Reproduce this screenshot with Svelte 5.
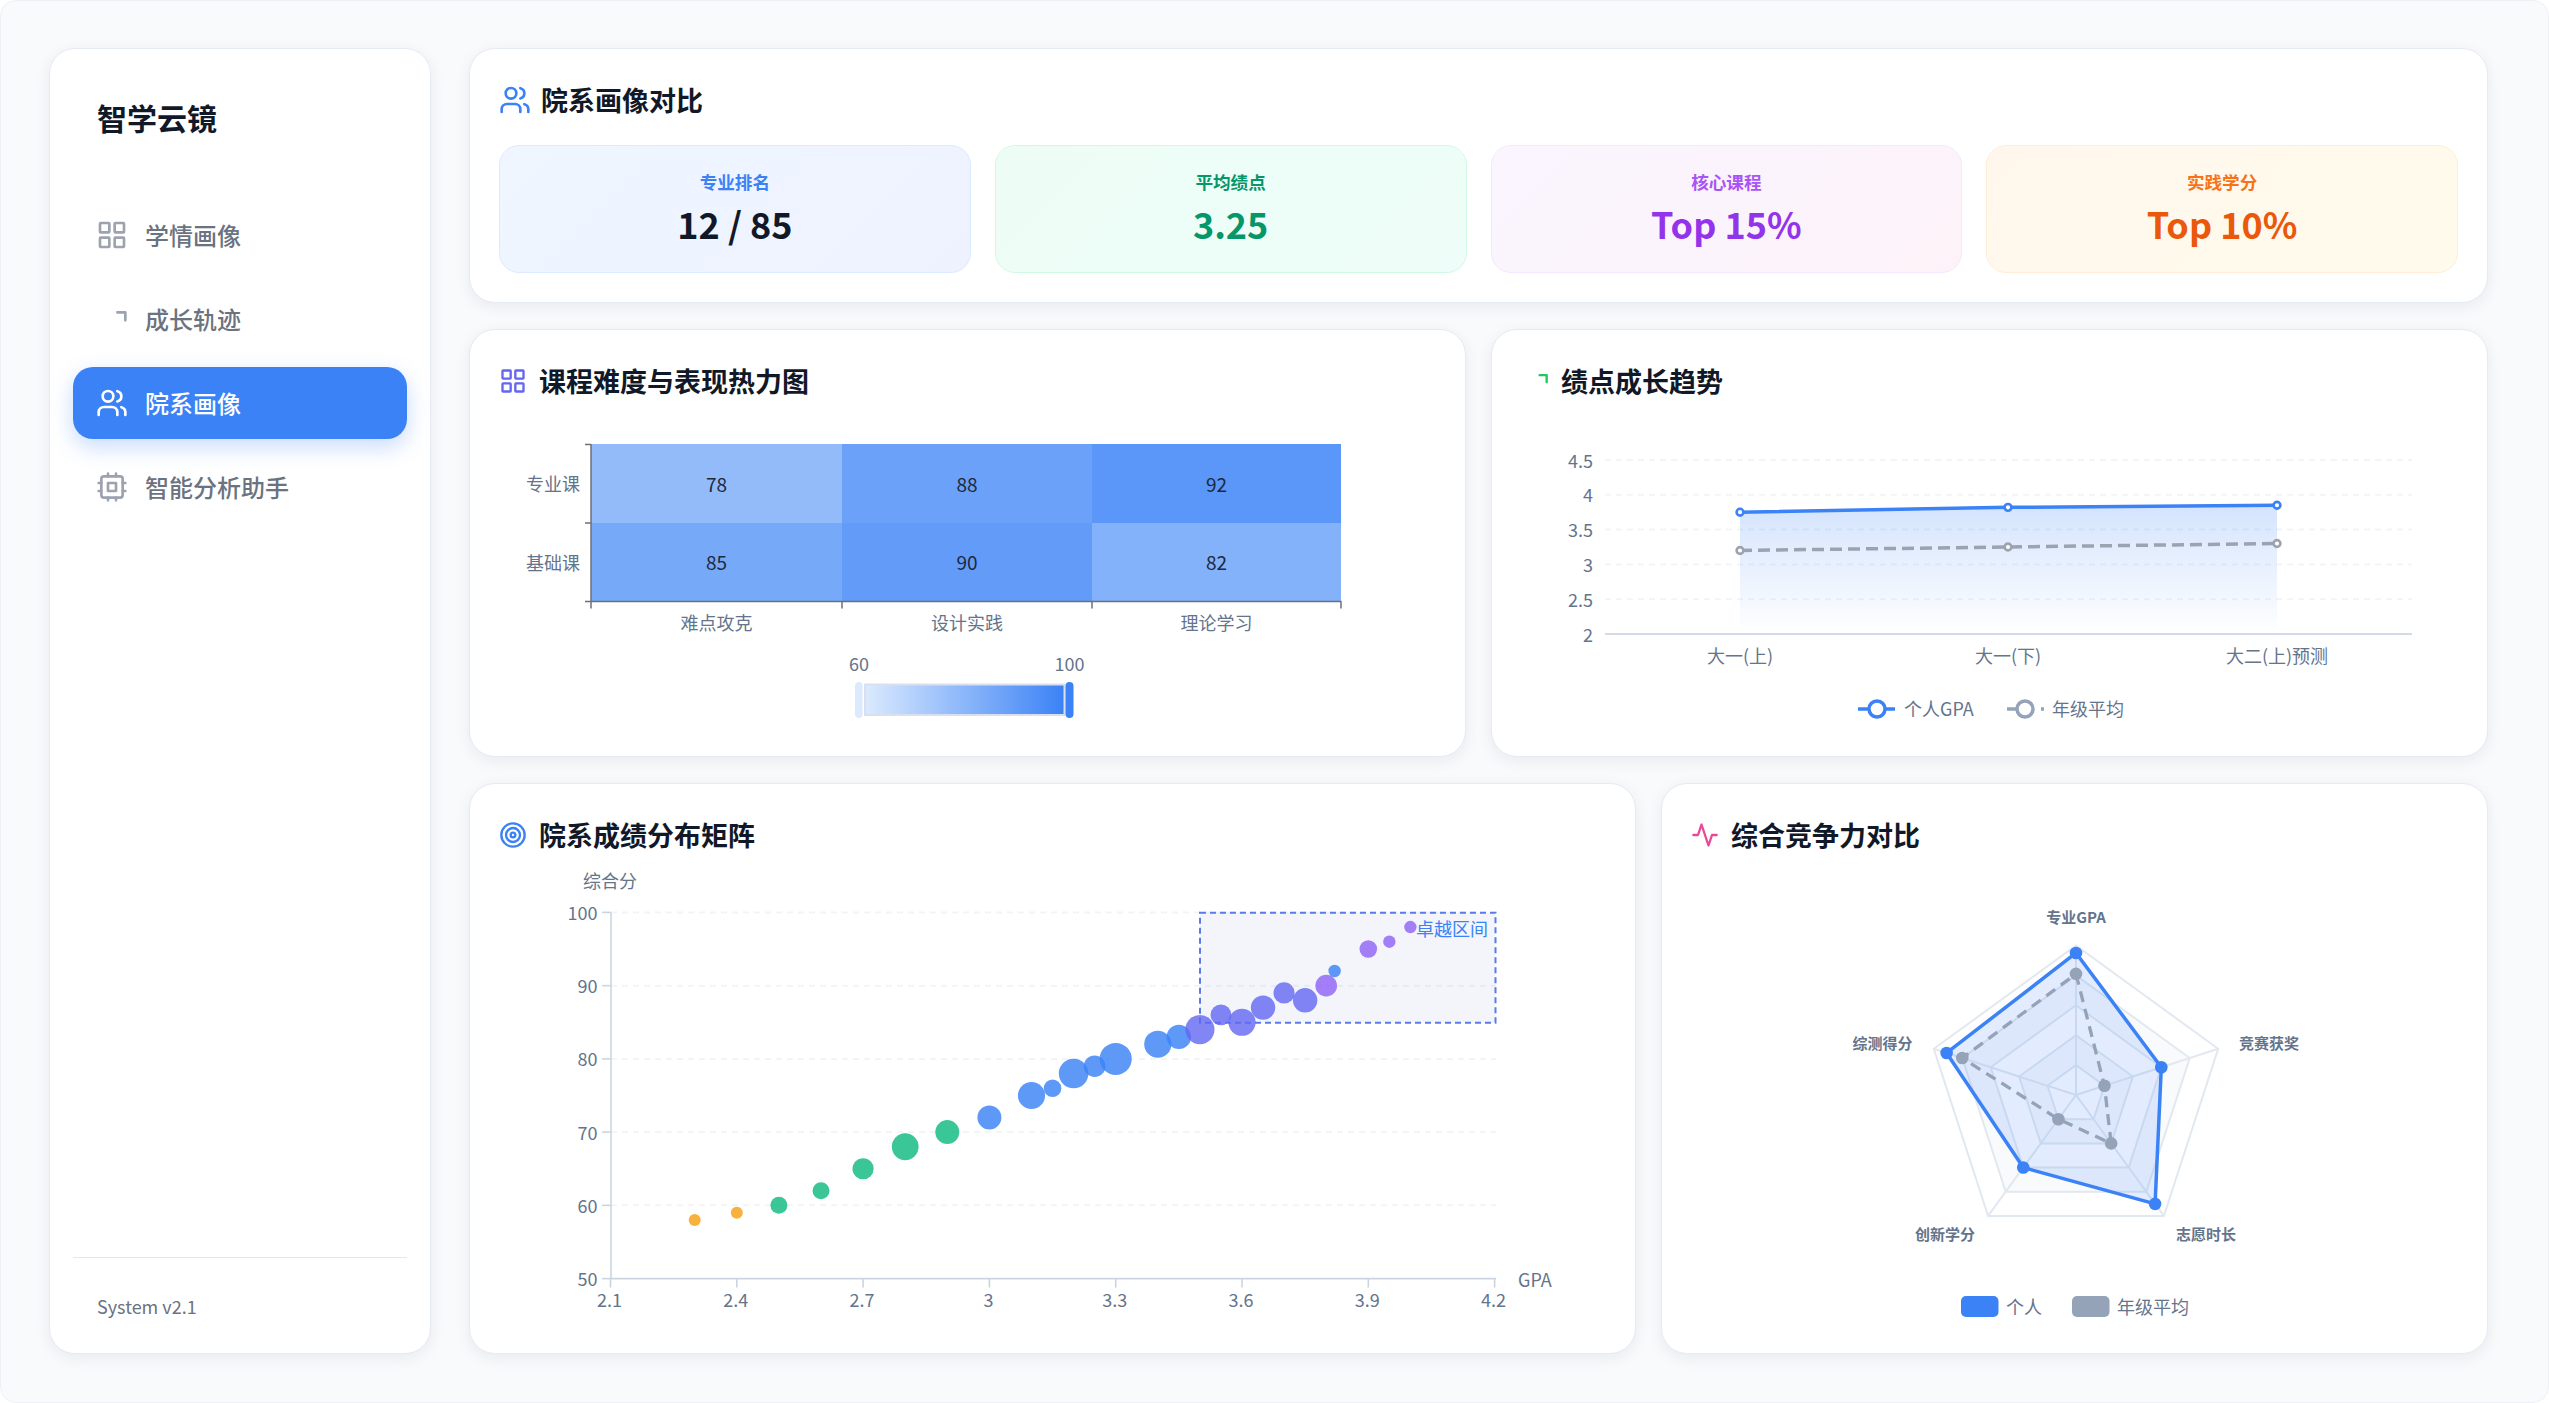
<script>
  const nav = [
    { label: '学情画像', icon: 'grid' },
    { label: '成长轨迹', icon: 'trend' },
    { label: '院系画像', icon: 'users', active: true },
    { label: '智能分析助手', icon: 'cpu' }
  ];
  const stats = [
    { k: 'blue', label: '专业排名', value: '12 / 85' },
    { k: 'green', label: '平均绩点', value: '3.25' },
    { k: 'purple', label: '核心课程', value: 'Top 15%' },
    { k: 'orange', label: '实践学分', value: 'Top 10%' }
  ];

  // heatmap
  const hx = [591, 842, 1092, 1341];
  const hy = [444, 523, 601];
  const heatCells = [
    [0, 0, 78], [1, 0, 88], [2, 0, 92],
    [0, 1, 85], [1, 1, 90], [2, 1, 82]
  ];
  const heatColor = (v) => {
    const t = (v - 60) / 40;
    const m = (a, b) => Math.round(a + (b - a) * t);
    return `rgb(${m(219, 59)},${m(234, 130)},${m(254, 246)})`;
  };
  const heatX = ['难点攻克', '设计实践', '理论学习'];
  const heatY = ['专业课', '基础课'];

  // line chart
  const lx = [1740, 2008, 2277];
  const ly = (v) => 634 - (v - 2) * 69.6;
  const lineTicks = [2, 2.5, 3, 3.5, 4, 4.5];
  const gpa = [3.75, 3.82, 3.85];
  const avg = [3.2, 3.25, 3.3];
  const pts = (arr) => arr.map((v, i) => `${lx[i]},${ly(v)}`).join(' ');
  const lineLabels = ['大一(上)', '大一(下)', '大二(上)预测'];

  // scatter
  const sx = (v) => 610.5 + (v - 2.1) * 421;
  const sy = (v) => 1278.6 - (v - 50) * 7.324;
  const C = { o: 'rgba(245,158,11,.8)', g: 'rgba(16,185,129,.82)', b: 'rgba(59,130,246,.82)', i: 'rgba(99,102,241,.8)', p: 'rgba(139,92,246,.78)' };
  const dots = [
    [2.3, 58, 6, 'o'], [2.4, 59, 6, 'o'], [2.5, 60, 8.5, 'g'], [2.6, 62, 8.5, 'g'],
    [2.7, 65, 10.6, 'g'], [2.8, 68, 13.4, 'g'], [2.9, 70, 12, 'g'], [3, 72, 12, 'b'],
    [3.1, 75, 13.6, 'b'], [3.15, 76, 8.8, 'b'], [3.2, 78, 14.8, 'b'], [3.25, 79, 10.8, 'b'],
    [3.3, 80, 16, 'b'], [3.4, 82, 13.6, 'b'], [3.45, 83, 12.2, 'b'], [3.5, 84, 14.6, 'i'],
    [3.55, 86, 10.4, 'i'], [3.6, 85, 13.6, 'i'], [3.65, 87, 12.2, 'i'], [3.7, 89, 10.6, 'i'],
    [3.75, 88, 12.2, 'i'], [3.8, 90, 10.8, 'p'], [3.82, 92, 6.2, 'b'], [3.9, 95, 8.8, 'p'],
    [3.95, 96, 6.2, 'p'], [4, 98, 6.2, 'p']
  ];
  const scatterY = [50, 60, 70, 80, 90, 100];
  const scatterX = [[2.1, '2.1'], [2.4, '2.4'], [2.7, '2.7'], [3, '3'], [3.3, '3.3'], [3.6, '3.6'], [3.9, '3.9'], [4.2, '4.2']];

  // radar
  const RC = { x: 2076, y: 1095, r: 149.5 };
  const rp = (i, f) => {
    const a = (-90 + 72 * i) * Math.PI / 180;
    return [RC.x + Math.cos(a) * RC.r * f, RC.y + Math.sin(a) * RC.r * f];
  };
  const poly = (vals) => vals.map((f, i) => rp(i, f).join(',')).join(' ');
  const rings = [1, 0.8, 0.6, 0.4, 0.2];
  const ringFill = ['#ffffff', '#f8fafc', '#ffffff', '#f8fafc', '#ffffff'];
  const mine = [0.95, 0.6, 0.9, 0.6, 0.91];
  const peers = [0.81, 0.2, 0.4, 0.2, 0.8];
  const radarLabels = [
    ['专业GPA', 2076, 918], ['竞赛获奖', 2269, 1044], ['志愿时长', 2206, 1234.6],
    ['创新学分', 1945, 1234.6], ['综测得分', 1882.5, 1044]
  ];
</script>

{#snippet icon(name, size)}
  <svg class="ico" width={size} height={size} viewBox="0 0 24 24" fill="none" stroke="currentColor" stroke-width="2" stroke-linecap="round" stroke-linejoin="round">
    {#if name === 'grid'}
      <rect x="3" y="3" width="7" height="7" rx="0.5" /><rect x="14" y="3" width="7" height="7" rx="0.5" />
      <rect x="14" y="14" width="7" height="7" rx="0.5" /><rect x="3" y="14" width="7" height="7" rx="0.5" />
    {:else if name === 'trend'}
      <polyline points="16 7 22 7 22 13" />
    {:else if name === 'users'}
      <path d="M16 21v-2a4 4 0 0 0-4-4H6a4 4 0 0 0-4 4v2" /><circle cx="9" cy="7" r="4" />
      <path d="M22 21v-2a4 4 0 0 0-3-3.87" /><path d="M16 3.13a4 4 0 0 1 0 7.75" />
    {:else if name === 'cpu'}
      <rect x="4" y="4" width="16" height="16" rx="2" /><rect x="9" y="9" width="6" height="6" />
      <path d="M15 2v2M15 20v2M2 15h2M2 9h2M20 15h2M20 9h2M9 2v2M9 20v2" />
    {:else if name === 'target'}
      <circle cx="12" cy="12" r="10" /><circle cx="12" cy="12" r="6" /><circle cx="12" cy="12" r="2" />
    {:else if name === 'activity'}
      <path d="M22 12h-4l-3 9L9 3l-3 9H2" />
    {/if}
  </svg>
{/snippet}

<div class="app">
  <aside class="side">
    <h1 class="brand">智学云镜</h1>
    <nav class="nav">
      {#each nav as n}
        <div class="item" class:active={n.active}>
          <span class="nav-ico">{@render icon(n.icon, 32)}</span>
          <span class="nav-txt">{n.label}</span>
        </div>
      {/each}
    </nav>
    <div class="foot"><span>System v2.1</span></div>
  </aside>

  <main class="main">
    <section class="card top">
      <h2 class="title big"><span class="c-blue">{@render icon('users', 32)}</span><span class="ttl">院系画像对比</span></h2>
      <div class="stats">
        {#each stats as s}
          <div class="stat {s.k}">
            <div class="lab">{s.label}</div>
            <div class="val">{s.value}</div>
          </div>
        {/each}
      </div>
    </section>

    <div class="row mid">
      <section class="card">
        <h2 class="title"><span class="c-indigo">{@render icon('grid', 28)}</span><span class="ttl">课程难度与表现热力图</span></h2>
        <svg class="chart" width="937" height="324" viewBox="499 404 937 324">
          <defs>
            <linearGradient id="vm" x1="0" x2="1" y1="0" y2="0">
              <stop offset="0" stop-color="#dbeafe" /><stop offset="1" stop-color="#3b82f6" />
            </linearGradient>
          </defs>
          {#each heatCells as [c, r, v]}
            <rect x={hx[c]} y={hy[r]} width={hx[c + 1] - hx[c]} height={hy[r + 1] - hy[r]} fill={heatColor(v)} />
            <text class="cell" x={(hx[c] + hx[c + 1]) / 2} y={(hy[r] + hy[r + 1]) / 2 + 1}>{v}</text>
          {/each}
          <path class="hax" d="M591 444V601.5H1341.5M585 444.5h6M585 523h6M585 601.5h6M591 601.5v7M842 601.5v7M1092 601.5v7M1341 601.5v7" />
          {#each heatY as t, i}
            <text class="lb end" x="580" y={(hy[i] + hy[i + 1]) / 2 + 1}>{t}</text>
          {/each}
          {#each heatX as t, i}
            <text class="lb mid-a" x={(hx[i] + hx[i + 1]) / 2} y="623">{t}</text>
          {/each}
          <text class="lb mid-a" x="859" y="664.5">60</text>
          <text class="lb mid-a" x="1069.5" y="664.5">100</text>
          <rect x="865" y="684.5" width="199.5" height="30.5" fill="url(#vm)" stroke="#d9dfee" stroke-width="2" />
          <rect x="855" y="682" width="7.5" height="36" rx="3.7" fill="#dbeafe" />
          <rect x="1065.5" y="682" width="8" height="36" rx="4" fill="#3b82f6" />
        </svg>
      </section>

      <section class="card">
        <h2 class="title"><span class="c-green">{@render icon('trend', 28)}</span><span class="ttl">绩点成长趋势</span></h2>
        <svg class="chart" width="937" height="324" viewBox="1521 404 937 324">
          <defs>
            <linearGradient id="area" x1="0" x2="0" y1="0" y2="1">
              <stop offset="0" stop-color="#3b82f6" stop-opacity="0.22" />
              <stop offset="1" stop-color="#3b82f6" stop-opacity="0" />
            </linearGradient>
          </defs>
          {#each lineTicks as t}
            <text class="lb end" x="1593" y={ly(t) + 1}>{t}</text>
            {#if t !== 2}
              <line class="grid" x1="1605" x2="2412" y1={ly(t)} y2={ly(t)} />
            {/if}
          {/each}
          <line x1="1605" x2="2412" y1="634" y2="634" stroke="#d5dae8" stroke-width="2" />
          <polygon fill="url(#area)" points="{pts(gpa)} 2277,634 1740,634" />
          <polyline class="l-blue" points={pts(gpa)} />
          <polyline class="l-gray" points={pts(avg)} />
          {#each gpa as v, i}
            <circle class="p-blue" cx={lx[i]} cy={ly(v)} r="3.4" />
          {/each}
          {#each avg as v, i}
            <circle class="p-gray" cx={lx[i]} cy={ly(v)} r="3.4" />
          {/each}
          {#each lineLabels as t, i}
            <text class="lb mid-a" x={lx[i]} y="656.5">{t}</text>
          {/each}
          <line x1="1858" x2="1895" y1="709" y2="709" stroke="#3b82f6" stroke-width="3.5" />
          <circle cx="1877" cy="709" r="8" fill="#fff" stroke="#3b82f6" stroke-width="3.5" />
          <text class="lb" x="1904" y="709.5">个人GPA</text>
          <line x1="2007" x2="2044" y1="709" y2="709" stroke="#94a3b8" stroke-width="3.5" stroke-dasharray="11 23 3" />
          <circle cx="2025" cy="709" r="8" fill="#fff" stroke="#94a3b8" stroke-width="3.5" />
          <text class="lb" x="2052" y="709.5">年级平均</text>
        </svg>
      </section>
    </div>

    <div class="row bot">
      <section class="card">
        <h2 class="title"><span class="c-blue">{@render icon('target', 28)}</span><span class="ttl">院系成绩分布矩阵</span></h2>
        <svg class="chart" width="1107" height="467" viewBox="499 858 1107 467">
          {#each scatterY as t}
            {#if t !== 50}
              <line class="grid" x1="611" x2="1496" y1={sy(t)} y2={sy(t)} />
            {/if}
            <line class="ax" x1="602" x2="611" y1={sy(t)} y2={sy(t)} />
            <text class="lb end" x="597.5" y={sy(t) + 1}>{t}</text>
          {/each}
          <rect class="zone" x="1200" y="912.7" width="295.5" height="110" />
          <line class="ax" x1="611" x2="611" y1={sy(100)} y2={sy(50)} />
          <line class="ax" x1="611" x2="1496" y1={sy(50)} y2={sy(50)} />
          {#each scatterX as [v, t]}
            <line class="ax" x1={sx(v)} x2={sx(v)} y1={sy(50)} y2={sy(50) + 9} />
            <text class="lb mid-a" x={sx(v) - 1} y="1300.5">{t}</text>
          {/each}
          <text class="lb mid-a" x="610" y="881.5">综合分</text>
          <text class="lb" x="1518" y="1280">GPA</text>
          <text class="zone-t" x="1488" y="929.5">卓越区间</text>
          {#each dots as [x, y, r, k]}
            <circle cx={sx(x)} cy={sy(y)} r={r} fill={C[k]} />
          {/each}
        </svg>
      </section>

      <section class="card">
        <h2 class="title"><span class="c-pink">{@render icon('activity', 28)}</span><span class="ttl">综合竞争力对比</span></h2>
        <svg class="chart" width="767" height="467" viewBox="1691 858 767 467">
          {#each rings as f, i}
            <polygon points={poly([f, f, f, f, f])} fill={ringFill[i]} stroke="#e2e8f0" stroke-width="2" />
          {/each}
          {#each [0, 1, 2, 3, 4] as i}
            <line x1={RC.x} y1={RC.y} x2={rp(i, 1)[0]} y2={rp(i, 1)[1]} stroke="#e2e8f0" stroke-width="2" />
          {/each}
          <polygon points={poly(mine)} fill="rgba(59,130,246,.15)" stroke="#3b82f6" stroke-width="3.5" stroke-linejoin="round" />
          <polygon points={poly(peers)} fill="none" stroke="#94a3b8" stroke-width="3.3" stroke-dasharray="11 7" />
          {#each mine as f, i}
            <circle cx={rp(i, f)[0]} cy={rp(i, f)[1]} r="6.3" fill="#3b82f6" />
          {/each}
          {#each peers as f, i}
            <circle cx={rp(i, f)[0]} cy={rp(i, f)[1]} r="6.3" fill="#94a3b8" />
          {/each}
          {#each radarLabels as [t, x, y]}
            <text class="rl" x={x} y={y}>{t}</text>
          {/each}
          <rect x="1961" y="1296" width="37.5" height="21" rx="5" fill="#3b82f6" />
          <text class="lb" x="2006" y="1307.5">个人</text>
          <rect x="2072" y="1296" width="37.5" height="21" rx="5" fill="#94a3b8" />
          <text class="lb" x="2117" y="1307.5">年级平均</text>
        </svg>
      </section>
    </div>
  </main>
</div>

<style>
  :global(body) {
    margin: 0;
    background: #fff;
  }
  .app {
    box-sizing: border-box;
    width: 100vw;
    height: 100vh;
    padding: 47px 60px 48px 48px;
    display: flex;
    gap: 38px;
    overflow: hidden;
    background: #f9fafc;
    border: 1px solid #eef0f5;
    border-radius: 16px;
    font-family: "Noto Sans CJK SC", "Noto Sans", sans-serif;
    color: #111827;
  }
  .side {
    box-sizing: border-box;
    width: 382px;
    flex: none;
    display: flex;
    flex-direction: column;
    padding: 0 23px;
    background: #fff;
    border: 1px solid #e6eaf3;
    border-radius: 26px;
    box-shadow: 0 4px 16px rgba(15, 23, 42, 0.07);
  }
  .brand {
    margin: 44px 0 58px 24px;
    font-size: 30px;
    line-height: 48px;
    font-weight: 700;
    color: #111827;
  }
  .nav {
    flex: 1;
    display: flex;
    flex-direction: column;
    gap: 12px;
  }
  .item {
    height: 72px;
    box-sizing: border-box;
    padding-left: 23px;
    display: flex;
    align-items: center;
    gap: 17px;
    font-size: 24px;
    font-weight: 500;
    color: #6b7280;
    border-radius: 20px;
  }
  .nav-txt {
    padding-bottom: 2px;
  }
  .nav-ico {
    display: flex;
    color: #9ca3af;
  }
  .item.active {
    color: #fff;
    background: #3b82f6;
    box-shadow: 0 8px 22px rgba(59, 130, 246, 0.28);
  }
  .item.active .nav-ico {
    color: #fff;
  }
  .foot {
    border-top: 1px solid #e5e7eb;
    padding: 33px 0 32px 24px;
    font-size: 18px;
    line-height: 30px;
    color: #6b7280;
  }
  .ico {
    display: block;
    flex: none;
  }
  .main {
    flex: 1;
    min-width: 0;
    display: grid;
    grid-template-rows: auto 428fr 571fr;
    gap: 26px;
  }
  .row {
    display: grid;
    gap: 25px;
    min-height: 0;
  }
  .mid {
    grid-template-columns: 1fr 1fr;
  }
  .bot {
    grid-template-columns: 1167fr 827fr;
  }
  .card {
    box-sizing: border-box;
    min-width: 0;
    display: flex;
    flex-direction: column;
    padding: 28px 29px;
    background: #fff;
    border: 1px solid #e6eaf3;
    border-radius: 26px;
    box-shadow: 0 4px 16px rgba(15, 23, 42, 0.07);
  }
  .title {
    margin: 0;
    height: 46px;
    display: flex;
    align-items: center;
    gap: 12px;
    font-size: 27px;
    font-weight: 700;
    color: #111827;
  }
  .title.big {
    gap: 10px;
  }
  .title span {
    display: flex;
  }
  .title .ttl {
    padding-bottom: 2px;
  }
  .c-blue { color: #3b82f6; }
  .c-indigo { color: #6366f1; }
  .c-green { color: #22c55e; }
  .c-pink { color: #ec4899; }
  .stats {
    margin-top: 22px;
    display: grid;
    grid-template-columns: repeat(4, 1fr);
    gap: 24px;
  }
  .stat {
    box-sizing: border-box;
    height: 128px;
    margin-bottom: 1px;
    border: 1px solid;
    border-radius: 20px;
    display: flex;
    flex-direction: column;
    align-items: center;
    padding-top: 22px;
  }
  .lab {
    font-size: 17.6px;
    line-height: 28px;
    font-weight: 700;
  }
  .val {
    margin-top: 0;
    font-size: 36px;
    line-height: 54px;
    font-weight: 700;
  }
  .blue { background: linear-gradient(135deg, #eff6ff, #eef2ff); border-color: #dbeafe; }
  .blue .lab { color: #3b82f6; }
  .blue .val { color: #111827; }
  .green { background: linear-gradient(135deg, #edfdf6, #eefdf9); border-color: #d1fae5; }
  .green .lab, .green .val { color: #059669; }
  .purple { background: linear-gradient(135deg, #faf5ff, #fdf2f8); border-color: #f3e8ff; }
  .purple .lab { color: #a855f7; }
  .purple .val { color: #9333ea; }
  .orange { background: linear-gradient(135deg, #fff7ed, #fffbeb); border-color: #ffedd5; }
  .orange .lab { color: #f97316; }
  .orange .val { color: #ea580c; }
  .chart {
    display: block;
    flex: none;
    overflow: visible;
  }
  .lb, .cell, .zone-t, .rl {
    dominant-baseline: central;
    transform: translateY(-1.5px);
  }
  .lb {
    font-size: 18px;
    fill: #64748b;
  }
  .end { text-anchor: end; }
  .mid-a { text-anchor: middle; }
  .cell {
    font-size: 19px;
    fill: #1e293b;
    text-anchor: middle;
  }
  .hax {
    fill: none;
    stroke: #6e7079;
    stroke-width: 1.5;
  }
  .grid {
    stroke: #f1f5f9;
    stroke-width: 2;
    stroke-dasharray: 6 5;
  }
  .ax {
    stroke: #cbd5e1;
    stroke-width: 1.6;
  }
  .l-blue {
    fill: none;
    stroke: #3b82f6;
    stroke-width: 3.5;
  }
  .l-gray {
    fill: none;
    stroke: #9ca3af;
    stroke-width: 3.5;
    stroke-dasharray: 12 6;
  }
  .p-blue {
    fill: #fff;
    stroke: #3b82f6;
    stroke-width: 2.6;
  }
  .p-gray {
    fill: #fff;
    stroke: #9ca3af;
    stroke-width: 2.6;
  }
  .zone {
    fill: rgba(90, 120, 190, 0.07);
    stroke: #5b7be8;
    stroke-width: 2;
    stroke-dasharray: 6 4;
  }
  .zone-t {
    font-size: 18px;
    fill: #3b82f6;
    text-anchor: end;
  }
  .rl {
    font-size: 15px;
    font-weight: 700;
    fill: #64748b;
    text-anchor: middle;
  }
</style>
